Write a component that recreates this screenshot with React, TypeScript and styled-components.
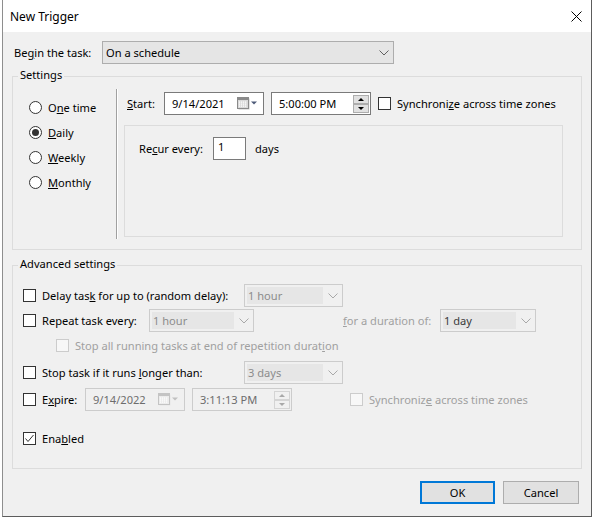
import React from "react";
import styled, { createGlobalStyle } from "styled-components";

const Global = createGlobalStyle`
  html, body { margin: 0; padding: 0; background: #ffffff; }
  body {
    font-family: "Noto Sans", "Segoe UI", "Liberation Sans", sans-serif;
    font-size: 11.1px;
    line-height: 15px;
    color: #000000;
  }
  * { box-sizing: border-box; }
`;

const Window = styled.div`
  margin-left: 2px;
  width: 590px;
  height: 517px;
  border-left: 1px solid #8e8e8e;
  border-right: 1px solid #5c5c5c;
  border-bottom: 1px solid #5c5c5c;
  background: #f0f0f0;
  display: flex;
  flex-direction: column;
`;

const TitleBar = styled.div`
  height: 32px;
  background: #ffffff;
  display: flex;
  align-items: center;
  justify-content: space-between;
  padding: 1px 9px 0 7px;
  flex-shrink: 0;
`;

const Title = styled.span`
  font-size: 12px;
`;

const Body = styled.div`
  flex: 1;
  padding: 9px 9px 0 9px;
  display: flex;
  flex-direction: column;
`;

const Row = styled.div<{ $mt?: number; $pl?: number }>`
  display: flex;
  align-items: center;
  height: 23px;
  margin-top: ${(p) => p.$mt ?? 0}px;
  padding-left: ${(p) => p.$pl ?? 0}px;
  flex-shrink: 0;
`;

const Label = styled.span<{ $w?: number; $ml?: number; $disabled?: boolean }>`
  display: inline-block;
  white-space: nowrap;
  ${(p) => (p.$w !== undefined ? `width: ${p.$w}px; flex-shrink: 0;` : "")}
  margin-left: ${(p) => p.$ml ?? 0}px;
  color: ${(p) => (p.$disabled ? "#a0a0a0" : "#000000")};
`;

const Acc = styled.span`
  text-decoration: underline;
  text-underline-offset: 1px;
`;

const MainCombo = styled.div<{ $w: number }>`
  width: ${(p) => p.$w}px;
  height: 23px;
  border: 1px solid #adadad;
  background: #e5e5e5;
  display: flex;
  align-items: center;
  padding-left: 3px;
`;

const ComboValue = styled.span`
  flex: 1;
`;

const ChevronBox = styled.span<{ $w: number }>`
  width: ${(p) => p.$w}px;
  display: flex;
  align-items: center;
  justify-content: center;
`;

const GroupBox = styled.section<{ $mt: number; $h: number }>`
  position: relative;
  margin-top: ${(p) => p.$mt}px;
  height: ${(p) => p.$h}px;
  border: 1px solid #dcdcdc;
  flex-shrink: 0;
`;

const Legend = styled.span`
  position: absolute;
  top: -10px;
  left: 5px;
  padding: 0 2px;
  line-height: 16px;
  background: #f0f0f0;
`;

const SettingsInner = styled.div`
  display: flex;
  height: 100%;
`;

const RadioCol = styled.div`
  width: 103px;
  padding: 18px 0 0 16px;
  display: flex;
  flex-direction: column;
`;

const RadioRow = styled.div`
  height: 25px;
  display: flex;
  align-items: center;
  gap: 6px;
`;

const RadioCircle = styled.span<{ $checked?: boolean }>`
  width: 13px;
  height: 13px;
  border-radius: 50%;
  border: 1px solid #333333;
  background: #ffffff;
  display: inline-flex;
  align-items: center;
  justify-content: center;
  flex-shrink: 0;
  &::after {
    content: "";
    display: ${(p) => (p.$checked ? "block" : "none")};
    width: 7px;
    height: 7px;
    border-radius: 50%;
    background: #333333;
  }
`;

const Separator = styled.div`
  width: 2px;
  margin: 12px 0 10px 0;
  border-left: 1px solid #a0a0a0;
  border-right: 1px solid #ffffff;
`;

const RightArea = styled.div`
  flex: 1;
  padding-top: 15px;
  display: flex;
  flex-direction: column;
`;

const InnerPanel = styled.div`
  margin: 10px 18px 0 6px;
  height: 112px;
  border: 1px solid #dcdcdc;
  padding: 11px 0 0 14px;
`;

const Field = styled.div<{ $w: number; $disabled?: boolean }>`
  width: ${(p) => p.$w}px;
  height: 23px;
  flex-shrink: 0;
  border: 1px solid ${(p) => (p.$disabled ? "#cccccc" : "#7a7a7a")};
  background: ${(p) => (p.$disabled ? "#f0f0f0" : "#ffffff")};
  color: ${(p) => (p.$disabled ? "#6d6d6d" : "#000000")};
  display: flex;
  align-items: center;
  padding-left: 7px;
`;

const FieldText = styled.span`
  flex: 1;
  white-space: nowrap;
`;

const PickerButton = styled.span`
  display: flex;
  align-items: center;
  gap: 2px;
  margin-right: 5px;
`;

const SpinBox = styled.span`
  display: flex;
  margin-right: 1px;
`;

const NumInput = styled.div`
  width: 33px;
  height: 23px;
  border: 1px solid #7a7a7a;
  background: #ffffff;
  padding: 1px 0 0 4px;
  line-height: 15px;
`;

const Gap = styled.span<{ $w: number }>`
  display: inline-block;
  width: ${(p) => p.$w}px;
  flex-shrink: 0;
`;

const CheckBoxBox = styled.span<{ $disabled?: boolean }>`
  width: 13px;
  height: 13px;
  flex-shrink: 0;
  border: 1px solid ${(p) => (p.$disabled ? "#cccccc" : "#333333")};
  background: ${(p) => (p.$disabled ? "#f7f7f7" : "#ffffff")};
  display: inline-flex;
  align-items: center;
  justify-content: center;
  margin-right: 6px;
`;

const Combo = styled.div<{ $w: number }>`
  width: ${(p) => p.$w}px;
  height: 23px;
  flex-shrink: 0;
  border: 1px solid #cccccc;
  background: #f0f0f0;
  display: flex;
  align-items: stretch;
  padding: 2px 0 2px 2px;
`;

const ComboText = styled.span<{ $dark?: boolean }>`
  flex: 1;
  background: #e6e6e6;
  padding-left: 1px;
  line-height: 17px;
  color: ${(p) => (p.$dark ? "#3a3a3a" : "#8c8c8c")};
  white-space: nowrap;
`;

const AdvInner = styled.div`
  padding: 18px 0 0 10px;
  display: flex;
  flex-direction: column;
`;

const ButtonRow = styled.div`
  margin-top: 12px;
  padding-right: 3px;
  display: flex;
  justify-content: flex-end;
  gap: 8px;
`;

const Button = styled.button<{ $primary?: boolean; $w: number }>`
  width: ${(p) => p.$w}px;
  height: 23px;
  font: inherit;
  color: #000000;
  background: #e1e1e1;
  border: ${(p) => (p.$primary ? "2px solid #0078d7" : "1px solid #adadad")};
  padding: 0;
  display: flex;
  align-items: center;
  justify-content: center;
`;

const Chevron = ({ color = "#606060" }: { color?: string }) => (
  <svg width="10" height="6" viewBox="0 0 10 6">
    <polyline points="0.5,0.5 5,5 9.5,0.5" fill="none" stroke={color} strokeWidth="1" />
  </svg>
);

const CloseIcon = () => (
  <svg width="11" height="11" viewBox="0 0 11 11">
    <line x1="0.5" y1="0.5" x2="10.5" y2="10.5" stroke="#000" strokeWidth="1" />
    <line x1="10.5" y1="0.5" x2="0.5" y2="10.5" stroke="#000" strokeWidth="1" />
  </svg>
);

const CalendarIcon = ({ disabled }: { disabled?: boolean }) => {
  const edge = disabled ? "#c4c4c4" : "#8a8a8a";
  const fill = disabled ? "#ececec" : "#d9d9d9";
  const tri = disabled ? "#c0c0c0" : "#4d5a78";
  return (
    <svg width="21" height="13" viewBox="0 0 21 13">
      <rect x="1.5" y="1.5" width="11" height="11" fill={disabled ? "#e6e6e6" : "#c8c8c8"} />
      <rect x="0.5" y="0.5" width="11" height="11" fill={fill} stroke={edge} />
      <rect x="1" y="1" width="10" height="2" fill={edge} />
      {[4, 6, 8].map((y) =>
        [2, 4, 6, 8].map((x) => (
          <rect key={`${x}-${y}`} x={x} y={y + 0.5} width="1.2" height="1.2" fill="#ffffff" />
        ))
      )}
      <polygon points="14,4.5 20,4.5 17,7.5" fill={tri} />
    </svg>
  );
};

const Spinner = ({ disabled }: { disabled?: boolean }) => {
  const border = disabled ? "#d4d4d4" : "#adadad";
  const bg = disabled ? "#f0f0f0" : "#e1e1e1";
  const tri = disabled ? "#a8a8a8" : "#000000";
  return (
    <svg width="16" height="18" viewBox="0 0 16 18">
      <rect x="0.5" y="0.5" width="15" height="8" fill={bg} stroke={border} />
      <rect x="0.5" y="9.5" width="15" height="8" fill={bg} stroke={border} />
      <polygon points="5,6 11,6 8,3" fill={tri} />
      <polygon points="5,12 11,12 8,15" fill={tri} />
    </svg>
  );
};

const CheckMark = () => (
  <svg width="11" height="11" viewBox="0 0 11 11">
    <polyline points="1.5,5.5 4,8.5 9.5,2" fill="none" stroke="#333" strokeWidth="1" />
  </svg>
);

const Check = ({ disabled, checked }: { disabled?: boolean; checked?: boolean }) => (
  <CheckBoxBox $disabled={disabled}>{checked ? <CheckMark /> : null}</CheckBoxBox>
);

const DateField = ({ value, disabled }: { value: string; disabled?: boolean }) => (
  <Field $w={100} $disabled={disabled}>
    <FieldText>{value}</FieldText>
    <PickerButton>
      <CalendarIcon disabled={disabled} />
    </PickerButton>
  </Field>
);

const TimeField = ({ value, disabled }: { value: string; disabled?: boolean }) => (
  <Field $w={100} $disabled={disabled}>
    <FieldText>{value}</FieldText>
    <SpinBox>
      <Spinner disabled={disabled} />
    </SpinBox>
  </Field>
);

const DisabledCombo = ({ w, value, dark }: { w: number; value: string; dark?: boolean }) => (
  <Combo $w={w}>
    <ComboText $dark={dark}>{value}</ComboText>
    <ChevronBox $w={19}>
      <Chevron color="#a8a8a8" />
    </ChevronBox>
  </Combo>
);

export default function App() {
  return (
    <>
      <Global />
      <Window>
        <TitleBar>
          <Title>New Trigger</Title>
          <CloseIcon />
        </TitleBar>
        <Body>
          <Row>
            <Label $w={88} $ml={2}>
              Be<Acc>g</Acc>in the task:
            </Label>
            <MainCombo $w={292}>
              <ComboValue>On a schedule</ComboValue>
              <ChevronBox $w={18}>
                <Chevron />
              </ChevronBox>
            </MainCombo>
          </Row>

          <GroupBox $mt={12} $h={174}>
            <Legend>Settings</Legend>
            <SettingsInner>
              <RadioCol>
                <RadioRow>
                  <RadioCircle />
                  <span>
                    O<Acc>n</Acc>e time
                  </span>
                </RadioRow>
                <RadioRow>
                  <RadioCircle $checked />
                  <span>
                    <Acc>D</Acc>aily
                  </span>
                </RadioRow>
                <RadioRow>
                  <RadioCircle />
                  <span>
                    <Acc>W</Acc>eekly
                  </span>
                </RadioRow>
                <RadioRow>
                  <RadioCircle />
                  <span>
                    <Acc>M</Acc>onthly
                  </span>
                </RadioRow>
              </RadioCol>
              <Separator />
              <RightArea>
                <Row>
                  <Label $w={37} $ml={9}>
                    <Acc>S</Acc>tart:
                  </Label>
                  <DateField value="9/14/2021" />
                  <Gap $w={7} />
                  <TimeField value="5:00:00 PM" />
                  <Gap $w={7} />
                  <Check />
                  <Label>
                    Synchroni<Acc>z</Acc>e across time zones
                  </Label>
                </Row>
                <InnerPanel>
                  <Row>
                    <Label $w={74}>
                      Re<Acc>c</Acc>ur every:
                    </Label>
                    <NumInput>1</NumInput>
                    <Label $ml={9}>days</Label>
                  </Row>
                </InnerPanel>
              </RightArea>
            </SettingsInner>
          </GroupBox>

          <GroupBox $mt={15} $h={204}>
            <Legend>Advanced settings</Legend>
            <AdvInner>
              <Row>
                <Check />
                <Label $w={202}>
                  Delay tas<Acc>k</Acc> for up to (random delay):
                </Label>
                <DisabledCombo w={99} value="1 hour" />
              </Row>
              <Row $mt={2}>
                <Check />
                <Label $w={107}>Repeat task every:</Label>
                <DisabledCombo w={105} value="1 hour" />
                <Label $w={97} $ml={89} $disabled>
                  <Acc>f</Acc>or a duration of:
                </Label>
                <DisabledCombo w={96} value="1 day" dark />
              </Row>
              <Row $mt={2} $pl={33}>
                <Check disabled />
                <Label $disabled>
                  Stop all running tasks at end of repetition durat<Acc>i</Acc>on
                </Label>
              </Row>
              <Row $mt={4}>
                <Check />
                <Label $w={202}>
                  Stop task if it runs <Acc>l</Acc>onger than:
                </Label>
                <DisabledCombo w={99} value="3 days" />
              </Row>
              <Row $mt={4}>
                <Check />
                <Label $w={43}>
                  E<Acc>x</Acc>pire:
                </Label>
                <DateField value="9/14/2022" disabled />
                <Gap $w={7} />
                <TimeField value="3:11:13 PM" disabled />
                <Gap $w={58} />
                <Check disabled />
                <Label $disabled>
                  Synchroniz<Acc>e</Acc> across time zones
                </Label>
              </Row>
              <Row $mt={16}>
                <Check checked />
                <Label>
                  Ena<Acc>b</Acc>led
                </Label>
              </Row>
            </AdvInner>
          </GroupBox>

          <ButtonRow>
            <Button $primary $w={75}>OK</Button>
            <Button $w={76}>Cancel</Button>
          </ButtonRow>
        </Body>
      </Window>
    </>
  );
}
